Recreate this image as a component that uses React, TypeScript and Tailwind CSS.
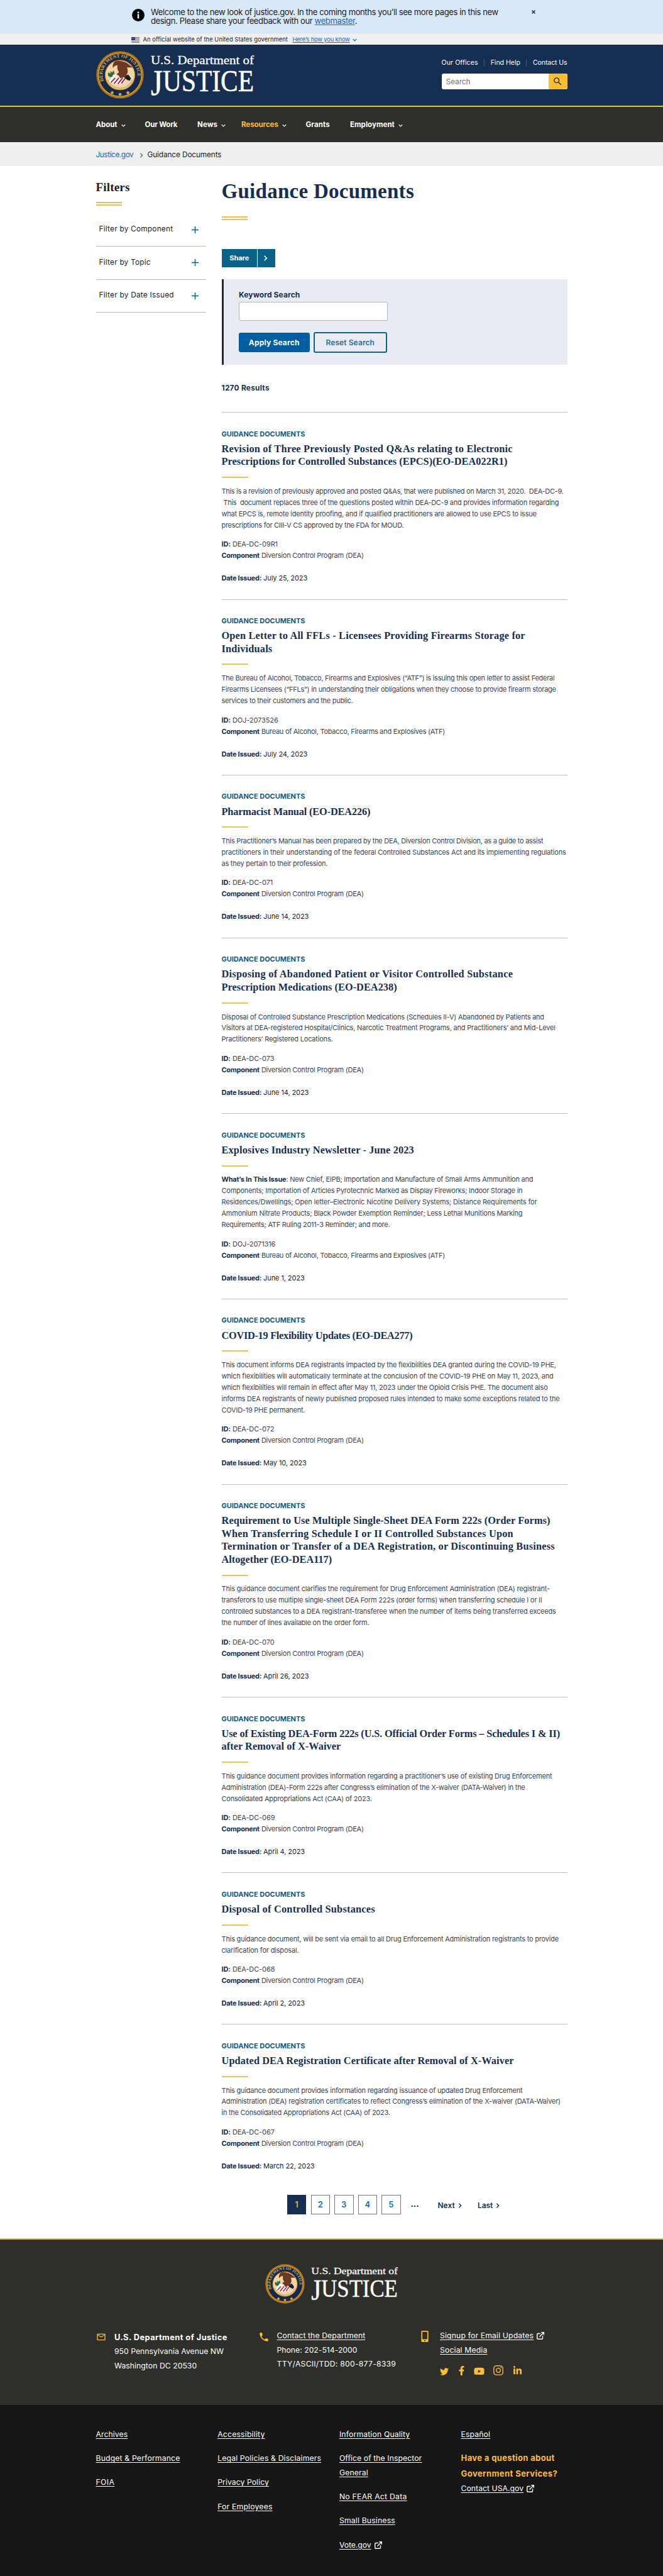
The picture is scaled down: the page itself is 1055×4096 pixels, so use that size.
import { ReactNode, useLayoutEffect, useRef, useState } from "react";
import { FaFacebookF, FaInstagram, FaLinkedinIn, FaMobileAlt, FaTwitter, FaYoutube } from "react-icons/fa";
import { FiExternalLink } from "react-icons/fi";
import { MdMailOutline, MdPhone, MdSearch } from "react-icons/md";

type Line = [text: string, width: number];

type Doc = {
  title: Line[];
  lead?: string;
  body: Line[];
  id: string;
  component: string;
  date: string;
};

const DEA = "Diversion Control Program (DEA)";
const ATF = "Bureau of Alcohol, Tobacco, Firearms and Explosives (ATF)";

const docs: Doc[] = [
  {
    title: [
      ["Revision of Three Previously Posted Q&As relating to Electronic", 463.3],
      ["Prescriptions for Controlled Substances (EPCS)(EO-DEA022R1)", 454.9],
    ],
    body: [
      ["This is a revision of previously approved and posted Q&As, that were published on March 31, 2020.  DEA-DC-9.", 544],
      [" This  document replaces three of the questions posted within DEA-DC-9 and provides information regarding", 536.8],
      ["what EPCS is, remote identity proofing, and if qualified practitioners are allowed to use EPCS to issue", 501.2],
      ["prescriptions for CIII-V CS approved by the FDA for MOUD.", 289.8],
    ],
    id: "DEA-DC-09R1",
    component: DEA,
    date: "July 25, 2023",
  },
  {
    title: [
      ["Open Letter to All FFLs - Licensees Providing Firearms Storage for", 483.3],
      ["Individuals", 80.9],
    ],
    body: [
      ["The Bureau of Alcohol, Tobacco, Firearms and Explosives (“ATF”) is issuing this open letter to assist Federal", 529.9],
      ["Firearms Licensees (“FFLs”) in understanding their obligations when they choose to provide firearm storage", 532.2],
      ["services to their customers and the public.", 209],
    ],
    id: "DOJ-2073526",
    component: ATF,
    date: "July 24, 2023",
  },
  {
    title: [["Pharmacist Manual (EO-DEA226)", 236.7]],
    body: [
      ["This Practitioner’s Manual has been prepared by the DEA, Diversion Control Division, as a guide to assist", 511.8],
      ["practitioners in their understanding of the federal Controlled Substances Act and its implementing regulations", 548.1],
      ["as they pertain to their profession.", 168.8],
    ],
    id: "DEA-DC-071",
    component: DEA,
    date: "June 14, 2023",
  },
  {
    title: [
      ["Disposing of Abandoned Patient or Visitor Controlled Substance", 463.7],
      ["Prescription Medications (EO-DEA238)", 279.2],
    ],
    body: [
      ["Disposal of Controlled Substance Prescription Medications (Schedules II-V) Abandoned by Patients and", 513.3],
      ["Visitors at DEA-registered Hospital/Clinics, Narcotic Treatment Programs, and Practitioners’ and Mid-Level", 531.1],
      ["Practitioners’ Registered Locations.", 177],
    ],
    id: "DEA-DC-073",
    component: DEA,
    date: "June 14, 2023",
  },
  {
    title: [["Explosives Industry Newsletter - June 2023", 306.4]],
    lead: "What’s In This Issue",
    body: [
      [": New Chief, EIPB; Importation and Manufacture of Small Arms Ammunition and", 495.8],
      ["Components; Importation of Articles Pyrotechnic Marked as Display Fireworks; Indoor Storage in", 478.8],
      ["Residences/Dwellings; Open letter–Electronic Nicotine Delivery Systems; Distance Requirements for", 501.9],
      ["Ammonium Nitrate Products; Black Powder Exemption Reminder; Less Lethal Munitions Marking", 478.8],
      ["Requirements; ATF Ruling 2011-3 Reminder; and more.", 267.8],
    ],
    id: "DOJ-2071316",
    component: ATF,
    date: "June 1, 2023",
  },
  {
    title: [["COVID-19 Flexibility Updates (EO-DEA277)", 303.8]],
    body: [
      ["This document informs DEA registrants impacted by the flexibilities DEA granted during the COVID-19 PHE,", 532.2],
      ["which flexibilities will automatically terminate at the conclusion of the COVID-19 PHE on May 11, 2023, and", 528],
      ["which flexibilities will remain in effect after May 11, 2023 under the Opioid Crisis PHE. The document also", 519],
      ["informs DEA registrants of newly published proposed rules intended to make some exceptions related to the", 537.9],
      ["COVID-19 PHE permanent.", 132.8],
    ],
    id: "DEA-DC-072",
    component: DEA,
    date: "May 10, 2023",
  },
  {
    title: [
      ["Requirement to Use Multiple Single-Sheet DEA Form 222s (Order Forms)", 523.1],
      ["When Transferring Schedule I or II Controlled Substances Upon", 464.4],
      ["Termination or Transfer of a DEA Registration, or Discontinuing Business", 530.3],
      ["Altogether (EO-DEA117)", 175.6],
    ],
    body: [
      ["This guidance document clarifies the requirement for Drug Enforcement Administration (DEA) registrant-", 522.4],
      ["transferors to use multiple single-sheet DEA Form 222s (order forms) when transferring schedule I or II", 509.9],
      ["controlled substances to a DEA registrant-transferee when the number of items being transferred exceeds", 532.2],
      ["the number of lines available on the order form.", 234.9],
    ],
    id: "DEA-DC-070",
    component: DEA,
    date: "April 26, 2023",
  },
  {
    title: [
      ["Use of Existing DEA-Form 222s (U.S. Official Order Forms – Schedules I & II)", 538.6],
      ["after Removal of X-Waiver", 189.9],
    ],
    body: [
      ["This guidance document provides information regarding a practitioner’s use of existing Drug Enforcement", 525.8],
      ["Administration (DEA)-Form 222s after Congress’s elimination of the X-waiver (DATA-Waiver) in the", 483],
      ["Consolidated Appropriations Act (CAA) of 2023.", 239.2],
    ],
    id: "DEA-DC-069",
    component: DEA,
    date: "April 4, 2023",
  },
  {
    title: [["Disposal of Controlled Substances", 244.4]],
    body: [
      ["This guidance document, will be sent via email to all Drug Enforcement Administration registrants to provide", 536.4],
      ["clarification for disposal.", 122.9],
    ],
    id: "DEA-DC-068",
    component: DEA,
    date: "April 2, 2023",
  },
  {
    title: [["Updated DEA Registration Certificate after Removal of X-Waiver", 465.2]],
    body: [
      ["This guidance document provides information regarding issuance of updated Drug Enforcement", 478.8],
      ["Administration (DEA) registration certificates to reflect Congress’s elimination of the X-waiver (DATA-Waiver)", 539.4],
      ["in the Consolidated Appropriations Act (CAA) of 2023.", 268.2],
    ],
    id: "DEA-DC-067",
    component: DEA,
    date: "March 22, 2023",
  },
];

/** Sets a single line of text to a given measure by spreading the difference over its letters. */
function Fit({ w, children, className = "" }: { w: number; children: ReactNode; className?: string }) {
  const ref = useRef<HTMLSpanElement>(null);
  const [spacing, setSpacing] = useState(0);
  useLayoutEffect(() => {
    const el = ref.current;
    if (!el) return;
    el.style.letterSpacing = "0px";
    const natural = el.getBoundingClientRect().width;
    const next = (w - natural) / Math.max(1, el.textContent?.length ?? 1);
    el.style.letterSpacing = `${next}px`;
    setSpacing(next);
  }, [w]);
  return (
    <span ref={ref} className={`whitespace-pre ${className}`} style={{ letterSpacing: spacing }}>
      {children}
    </span>
  );
}

function Chevron({ dir = "down", className = "" }: { dir?: "down" | "right"; className?: string }) {
  return (
    <svg viewBox="0 0 10 10" className={className} fill="none" stroke="currentColor" strokeWidth="1.8">
      <path d={dir === "down" ? "M1 3l4 4 4-4" : "M3 1l4 4-4 4"} />
    </svg>
  );
}

function Seal({ id, className }: { id: string; className: string }) {
  return (
    <svg viewBox="0 0 200 200" className={className}>
      <circle cx="100" cy="100" r="99" fill="#c8871b" />
      <circle cx="100" cy="100" r="95" fill="none" stroke="#5a3a10" strokeWidth="2" strokeDasharray="3 2" />
      <circle cx="100" cy="100" r="90" fill="#17294a" stroke="#e3a22c" strokeWidth="3" />
      <path id={id} d="M32.5 128 A 73 73 0 1 1 167.5 128" fill="none" />
      <text fill="#d8b45a" fontFamily="Liberation Serif, serif" fontSize="20" fontWeight="bold">
        <textPath href={`#${id}`} textLength="262" startOffset="2">
          DEPARTMENT OF JUSTICE
        </textPath>
      </text>
      <g fill="#d8b45a">
        <path d="M100 173l2.500 5.500 6 .6-4.500 4 1.300 6-5.300-3.100-5.300 3.100 1.300-6-4.500-4 6-.6z" />
        <path d="M67 166l2.500 5.500 6 .6-4.500 4 1.300 6-5.300-3.100-5.300 3.100 1.300-6-4.500-4 6-.6z" />
        <path d="M133 166l2.500 5.500 6 .6-4.500 4 1.300 6-5.300-3.100-5.300 3.100 1.300-6-4.500-4 6-.6z" />
      </g>
      <circle cx="100" cy="101" r="62" fill="#f0d6a2" stroke="#c8871b" strokeWidth="3" />
      <path d="M48 121 A 56 56 0 0 0 152 121" fill="none" stroke="#b08f5c" strokeWidth="5" strokeDasharray="2.500 2" />
      <path d="M50 90l12 5-4-11 10 6 4-9 5 12-6 14-14 3-8-8z" fill="#2e6a45" />
      <path d="M54 128L64 111l64 2-14 22c-22 9-42 6-60-7z" fill="#fff" />
      <path d="M62 132l18-20M75 137l20-24M91 138l20-25M106 136l16-22" stroke="#b0203a" strokeWidth="5" />
      <path d="M72 98l22 6-8 10-20-4z" fill="#f7f2ec" />
      <path
        d="M82 42c20-3 36 3 48 9l23 18-24 0c4 10 6 22-2 30l10 12-10 8-12-10-14 6-6-12-9-5 10-10c-8-8-8-20-6-28-8 0-16 4-20 12-2-14 2-26 12-30z"
        fill="#6b3a22"
      />
      <path d="M120 112l14-14 12 17-6 10-10-4z" fill="#141c38" />
    </svg>
  );
}

function Wordmark({ className }: { className: string }) {
  return (
    <svg
      viewBox="0 0 165 68"
      className={`overflow-visible ${className}`}
      fill="#fff"
      stroke="#fff"
      fontFamily="Liberation Serif, Georgia, serif"
    >
      <text x="0" y="17" fontSize="18" textLength="164" lengthAdjust="spacingAndGlyphs" strokeWidth="0.3">
        U.S. Department of
      </text>
      <text x="0" y="60" fontSize="47.500" textLength="164" lengthAdjust="spacingAndGlyphs" strokeWidth="0.5">
        <tspan fontSize="56" dy="5.500">J</tspan>
        <tspan dy="-5.500">USTICE</tspan>
      </text>
    </svg>
  );
}

function Flag() {
  return (
    <svg viewBox="0 0 26 18" className="mt-[1px] h-[9px] w-[13px]">
      <rect width="26" height="18" fill="#fff" />
      {[0, 4, 8, 12, 16].map((y) => (
        <rect key={y} y={y} width="26" height="2" fill="#db3e1f" />
      ))}
      <rect width="12" height="10" fill="#1e33b1" />
      <path d="M2 3h1M5 3h1M8 3h1M3 6h1M6 6h1M9 6h1" stroke="#fff" strokeWidth="1" />
    </svg>
  );
}

function DoubleRule({ className }: { className: string }) {
  return (
    <div className={`flex h-[6px] w-[41px] flex-col justify-between ${className}`}>
      <div className="h-[2px] bg-[#e8c04c]" />
      <div className="h-[2px] bg-[#f5bd4a]" />
    </div>
  );
}

function Article({ doc, last }: { doc: Doc; last: boolean }) {
  return (
    <article
      className={
        last ? "pt-[24.500px] pb-[25px]" : "mb-[1px] pt-[24.500px] pb-[24.400px] shadow-[0_1px_0_#bdbec1]"
      }
    >
      <p className="text-[11px] leading-[18px] font-bold text-[#0f5c82]">
        <Fit w={133}>GUIDANCE DOCUMENTS</Fit>
      </p>
      <h2 className="mt-[5.100px] font-['Liberation_Serif',serif] text-[16.300px] leading-[20.500px] font-bold text-[#162e51]">
        {doc.title.map(([line, w]) => (
          <span key={line} className="block h-[20.500px]">
            <Fit w={w}>{line}</Fit>
          </span>
        ))}
      </h2>
      <div className="mt-[13.200px] h-[2px] w-[42px] bg-[#f0c350]" />
      <p className="mt-[12.900px] text-[11px] leading-[17.950px] text-[#3d4551]">
        {doc.body.map(([line, w], i) => (
          <span key={line} className="block h-[17.950px]">
            <Fit w={w}>
              {i === 0 && doc.lead && <b className="font-bold text-[#162e51]">{doc.lead}</b>}
              {line}
            </Fit>
          </span>
        ))}
      </p>
      <dl className="mt-[11.500px] text-[11px] leading-[18px] text-[#3d4551]">
        <div className="h-[18px] tracking-[-0.100px]">
          <dt className="inline font-bold text-[#162e51]">ID:</dt> <dd className="inline">{doc.id}</dd>
        </div>
        <div className="h-[36px]">
          <dt className="inline font-bold text-[#162e51]">
            <Fit w={60.3}>Component</Fit>
          </dt>{" "}
          <dd className="inline">
            <Fit w={doc.component === DEA ? 162.8 : 292}>{doc.component}</Fit>
          </dd>
        </div>
        <div className="h-[18px] tracking-[-0.100px]">
          <dt className="inline font-bold text-[#162e51]">
            <Fit w={63.6}>Date Issued:</Fit>
          </dt>{" "}
          <dd className="inline text-[#1b1b1b]">{doc.date}</dd>
        </div>
      </dl>
    </article>
  );
}

function FooterLink({ children, w, ext }: { children: ReactNode; w: number; ext?: boolean }) {
  return (
    <span className="flex items-center">
      <Fit w={w} className="underline underline-offset-2">
        {children}
      </Fit>
      {ext && <FiExternalLink className="ml-[4px] size-[14px]" strokeWidth={2.4} />}
    </span>
  );
}

const nav = [
  { label: "About", fit: 34, menu: true, w: "w-[78px]" },
  { label: "Our Work", fit: 51.8, menu: false, w: "w-[83.500px]" },
  { label: "News", fit: 32.2, menu: true, w: "w-[70px]" },
  { label: "Resources", fit: 58.8, menu: true, w: "w-[102.500px]", active: true },
  { label: "Grants", fit: 38.4, menu: false, w: "w-[70.500px]" },
  { label: "Employment", fit: 70.9, menu: true, w: "w-[100px]" },
];

const filters: Line[] = [
  ["Filter by Component", 117.8],
  ["Filter by Topic", 82.3],
  ["Filter by Date Issued", 119.3],
];

export default function App() {
  return (
    <div className="h-[4096px] w-[1055px] overflow-hidden bg-white font-['Inter',sans-serif] text-[#1b1b1b]">
      <div className="flex h-[54px] bg-[#d9e8f6] pl-[210px]">
        <svg viewBox="0 0 20 20" className="mt-[14px] size-[20px]">
          <circle cx="10" cy="10" r="10" fill="#000" />
          <rect x="8.700" y="4.500" width="2.600" height="2.600" fill="#d9e8f6" />
          <rect x="8.700" y="8.300" width="2.600" height="7" fill="#d9e8f6" />
        </svg>
        <p className="ml-[10px] pt-[12px] text-[13px] leading-[14px]">
          <span className="block">
            <Fit w={552.8}>
              Welcome to the new look of justice.gov. In the coming months you’ll see more pages in this new
            </Fit>
          </span>
          <span className="block">
            <Fit w={328}>
              design. Please share your feedback with our <a className="text-[#1a66b5] underline">webmaster</a>.
            </Fit>
          </span>
        </p>
        <svg viewBox="0 0 6 6" className="mt-[16px] mr-[203px] ml-auto size-[6px]" stroke="#1b2a44" strokeWidth="1.500">
          <path d="M.5.5l5 5M5.500.5l-5 5" />
        </svg>
      </div>

      <div className="flex h-[17px] items-center bg-[#f0f0f0] pl-[208.500px] text-[9.400px] leading-[17px]">
        <Flag />
        <span className="ml-[6px] w-[238px]">
          <Fit w={230.5}>An official website of the United States government</Fit>
        </span>
        <a className="w-[95px] text-[#1a66b5] underline">
          <Fit w={91.2}>Here’s how you know</Fit>
        </a>
        <Chevron className="mt-[2px] size-[7px] text-[#1a66b5]" />
      </div>

      <header className="h-[97px] bg-[#162e51]">
        <div className="mx-auto flex w-[750px]">
          <Seal id="ring-top" className="mt-[10px] size-[76px]" />
          <Wordmark className="mt-[14px] ml-[11px] h-[68px] w-[165px]" />
          <div className="ml-auto w-[200px] pt-[20px] text-white">
            <div className="flex items-center justify-between text-[10.600px] leading-[18px]">
              <Fit w={58.1}>Our Offices</Fit>
              <span className="h-[12px] w-px bg-[#3d577f]" />
              <Fit w={47.3}>Find Help</Fit>
              <span className="h-[12px] w-px bg-[#3d577f]" />
              <Fit w={54.5}>Contact Us</Fit>
            </div>
            <div className="mt-[7.500px] flex h-[25px] overflow-hidden rounded-[3px] bg-white">
              <span className="flex-1 pl-[7px] text-[12px] leading-[25px] text-[#757575]">
                <Fit w={39}>Search</Fit>
              </span>
              <span className="flex w-[30px] items-center justify-center bg-[#ffbe2e]">
                <MdSearch className="size-[17px] text-[#2b2b2b]" />
              </span>
            </div>
          </div>
        </div>
      </header>

      <nav className="h-[58px] border-t-2 border-[#dcc545] bg-[#2e2f2a]">
        <div className="mx-auto flex w-[750px] pt-[16.500px] text-[11.500px] leading-[22px] font-bold text-white">
          {nav.map((n) => (
            <a key={n.label} className={`${n.w} flex items-center`}>
              <Fit w={n.fit} className={n.active ? "text-[#ffbe2e]" : ""}>
                {n.label}
              </Fit>
              {n.menu && <Chevron className="mt-[3px] ml-[6px] size-[7px]" />}
            </a>
          ))}
        </div>
      </nav>

      <div className="h-[38px] bg-[#eeefee]">
        <div className="mx-auto flex h-[38px] w-[750px] items-center pt-[3px] text-[11.800px]">
          <a className="w-[68px] text-[#1a66b5]">
            <Fit w={59.8}>Justice.gov</Fit>
          </a>
          <Chevron dir="right" className="size-[8px] text-[#6a6d70]" />
          <span className="ml-[6px]">
            <Fit w={118}>Guidance Documents</Fit>
          </span>
        </div>
      </div>

      <div className="mx-auto flex h-[3295px] w-[750px] justify-between">
        <aside className="w-[175px] pt-[21.500px]">
          <h2 className="font-['Liberation_Serif',serif] text-[19px] leading-[24px] font-bold">
            <Fit w={54}>Filters</Fit>
          </h2>
          <DoubleRule className="mt-[11.500px]" />
          <div className="mt-[12.500px]">
            {filters.map(([f, w]) => (
              <div
                key={f}
                className="flex h-[52.500px] items-center justify-between border-b border-[#b5b7ba] pr-[12px] pl-[5px] text-[11.800px]"
              >
                <Fit w={w}>{f}</Fit>
                <svg viewBox="0 0 12 12" className="size-[11px]" stroke="#0b5f8f" strokeWidth="1.600">
                  <path d="M6 0v12M0 6h12" />
                </svg>
              </div>
            ))}
          </div>
        </aside>

        <main className="w-[550px] pt-[19.500px]">
          <h1 className="font-['Liberation_Serif',serif] text-[33px] leading-[40px] font-bold text-[#162e51]">
            <Fit w={306.5}>Guidance Documents</Fit>
          </h1>
          <DoubleRule className="mt-[20.500px]" />
          <div className="mt-[46px] flex h-[29px] w-[85.500px] bg-[#0a6288] text-[11px] leading-[28px] font-bold text-white">
            <span className="w-[57.500px] border-r border-white text-center">
              <Fit w={31}>Share</Fit>
            </span>
            <span className="flex flex-1 items-center pl-[8px]">
              <Chevron dir="right" className="size-[9px]" />
            </span>
          </div>
          <section className="mt-[19px] h-[136px] border-l-[3px] border-[#1c2845] bg-[#e8ebf3] pt-[15px] pl-[24.500px]">
            <label className="block text-[12px] leading-[20px] font-bold text-[#162e51]">
              <Fit w={97.4}>Keyword Search</Fit>
            </label>
            <div className="mt-[1px] h-[29.500px] w-[237px] rounded-[2px] border border-[#b3b8bf] bg-white" />
            <div className="mt-[18.500px] flex items-center gap-[6px] text-[12px]">
              <button className="h-[31.500px] w-[112.500px] rounded-[3px] bg-[#005ea2] font-bold text-white">
                <Fit w={80.8}>Apply Search</Fit>
              </button>
              <button className="h-[33px] w-[117.500px] rounded-[3px] border-2 border-[#14607f] font-semibold text-[#2a6f92]">
                <Fit w={77.6}>Reset Search</Fit>
              </button>
            </div>
          </section>
          <p className="mt-[26px] mb-[1px] h-[49.300px] pt-px text-[11.800px] leading-[20px] font-bold text-[#162e51] shadow-[0_1px_0_#bdbec1]">
            <Fit w={76.3}>1270 Results</Fit>
          </p>
          {docs.map((d, i) => (
            <Article key={d.id} doc={d} last={i === docs.length - 1} />
          ))}
          <div className="mt-[12px] flex pl-[104.500px] text-[13px] leading-[29px] font-semibold">
            {[1, 2, 3, 4, 5].map((n) => (
              <span
                key={n}
                className={
                  n === 1
                    ? "mr-[7.500px] h-[31.500px] w-[30px] border border-[#162e51] bg-[#162e51] text-center text-[#d9b94a]"
                    : "mr-[7px] h-[31.500px] w-[30.500px] border border-[#71767a] text-center text-[#1470b8]"
                }
              >
                {n}
              </span>
            ))}
            <span className="ml-[9px] w-[43px] font-bold">...</span>
            <span className="flex w-[63.500px] items-center pt-[2px] text-[12px] text-[#162e51]">
              <Fit w={27.2}>Next</Fit> <Chevron dir="right" className="ml-[4px] size-[8px]" />
            </span>
            <span className="flex items-center pt-[2px] text-[12px] text-[#162e51]">
              <Fit w={24.2}>Last</Fit> <Chevron dir="right" className="ml-[4px] size-[8px]" />
            </span>
          </div>
        </main>
      </div>

      <footer>
        <div className="h-[265px] border-t-2 border-[#e8c23a] bg-[#2e2f2a] pt-[39px] text-[12.200px] leading-[22.700px] text-white">
          <div className="flex justify-center">
            <Seal id="ring-bottom" className="size-[63px]" />
            <Wordmark className="mt-[2px] ml-[10px] h-[57px] w-[139px]" />
          </div>
          <div className="mx-auto mt-[40px] flex w-[750px]">
            <div className="flex w-[258.500px]">
              <MdMailOutline className="mt-[5px] size-[16px] text-[#ffbe2e]" />
              <div className="ml-[13.500px] pt-[2.500px]">
                <p className="text-[12.800px] font-bold">
                  <Fit w={179.8}>U.S. Department of Justice</Fit>
                </p>
                <p>
                  <Fit w={174}>950 Pennsylvania Avenue NW</Fit>
                </p>
                <p>
                  <Fit w={131.2}>Washington DC 20530</Fit>
                </p>
              </div>
            </div>
            <div className="flex w-[258.500px]">
              <MdPhone className="mt-[4px] size-[18px] text-[#ffbe2e]" />
              <div className="ml-[11.500px]">
                <FooterLink w={140.8}>Contact the Department</FooterLink>
                <p>
                  <Fit w={128}>Phone: 202-514-2000</Fit>
                </p>
                <p>
                  <Fit w={189.7}>TTY/ASCII/TDD: 800-877-8339</Fit>
                </p>
              </div>
            </div>
            <div className="flex">
              <FaMobileAlt className="mt-[3px] h-[18px] w-[12px] text-[#ffbe2e]" />
              <div className="ml-[18.500px]">
                <FooterLink w={149.2} ext>
                  Signup for Email Updates
                </FooterLink>
                <FooterLink w={75.4}>Social Media</FooterLink>
                <div className="mt-[12px] flex items-end text-[#ffbe2e]">
                  <FaTwitter className="-mb-[1px] size-[14px]" />
                  <FaFacebookF className="ml-[13px] size-[15px]" />
                  <FaYoutube className="-mb-[2px] ml-[12px] size-[17px]" />
                  <FaInstagram className="-mb-[1px] ml-[13px] size-[18px]" />
                  <FaLinkedinIn className="ml-[14px] size-[15px]" />
                </div>
              </div>
            </div>
          </div>
        </div>
        <div className="h-[272px] bg-[#171717] pt-[36px] text-[12.200px] leading-[22.700px] text-white">
          <div className="mx-auto flex w-[750px]">
            <div className="flex w-[193.700px] flex-col gap-[15.500px]">
              <FooterLink w={50.8}>Archives</FooterLink>
              <FooterLink w={134}>Budget &amp; Performance</FooterLink>
              <FooterLink w={29.8}>FOIA</FooterLink>
            </div>
            <div className="flex w-[193.700px] flex-col gap-[15.500px]">
              <FooterLink w={75.4}>Accessibility</FooterLink>
              <FooterLink w={164.9}>Legal Policies &amp; Disclaimers</FooterLink>
              <FooterLink w={81.7}>Privacy Policy</FooterLink>
              <FooterLink w={87.4}>For Employees</FooterLink>
            </div>
            <div className="flex w-[193.700px] flex-col gap-[15.500px]">
              <FooterLink w={112.5}>Information Quality</FooterLink>
              <div>
                <FooterLink w={131.4}>Office of the Inspector</FooterLink>
                <FooterLink w={46}>General</FooterLink>
              </div>
              <FooterLink w={107.8}>No FEAR Act Data</FooterLink>
              <FooterLink w={89}>Small Business</FooterLink>
              <FooterLink w={50.8} ext>
                Vote.gov
              </FooterLink>
            </div>
            <div>
              <FooterLink w={46.6}>Español</FooterLink>
              <p className="mt-[13px] text-[13px] leading-[25px] font-bold text-[#ffbe2e]">
                <span className="block">
                  <Fit w={149}>Have a question about</Fit>
                </span>
                <span className="block">
                  <Fit w={153.6}>Government Services?</Fit>
                </span>
              </p>
              <FooterLink w={99.5} ext>
                Contact USA.gov
              </FooterLink>
            </div>
          </div>
        </div>
      </footer>
    </div>
  );
}
